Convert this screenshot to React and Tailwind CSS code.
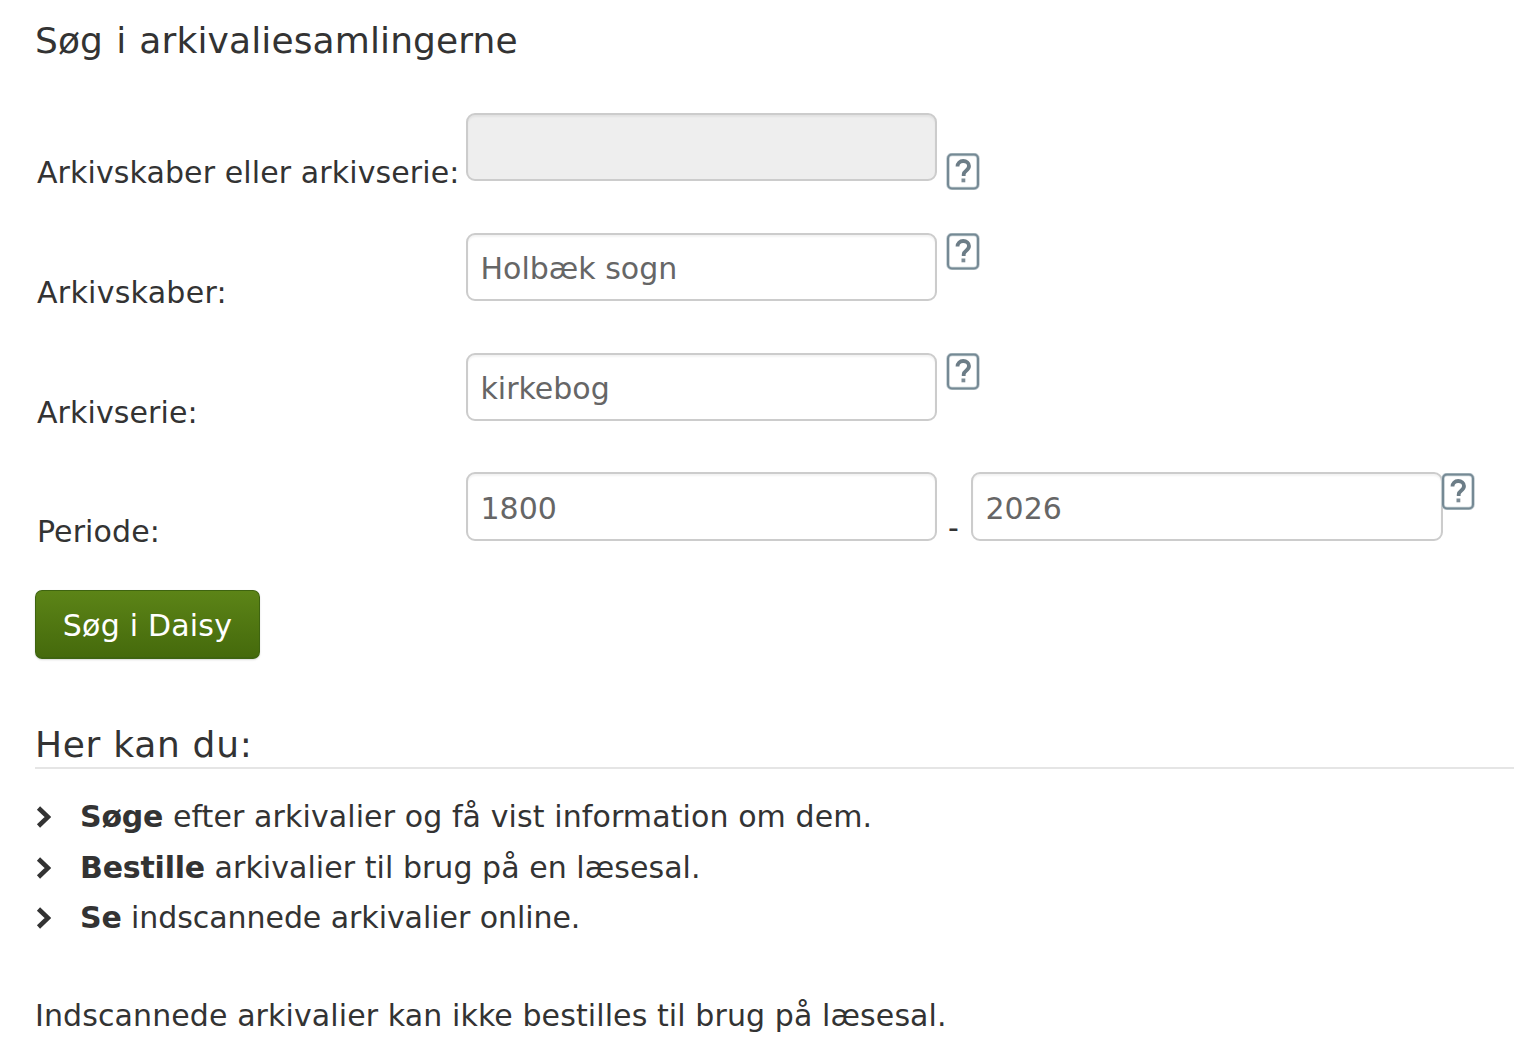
function HelpIcon({ className = '' }) {
  return (
    <svg className={`block shrink-0 ${className}`} width="34" height="37" viewBox="0 0 34 37" fill="none">
      <rect x="2" y="1.500" width="30" height="34" rx="4" fill="#fff" stroke="#c3ced3" strokeWidth="3.600" />
      <rect x="2" y="1.500" width="30" height="34" rx="4" stroke="#758994" strokeWidth="2" />
      <path d="M11.500 13.500c0-3.300 2.400-5.500 5.700-5.500s5.800 2.100 5.800 5c0 2.200-1.200 3.400-2.900 4.700-1.500 1.100-2.400 2-2.400 3.800v1.500" stroke="#6c7d87" strokeWidth="3.800" fill="none" />
      <rect x="15.500" y="25.500" width="3.800" height="3.800" fill="#7d8c95" />
    </svg>
  )
}

function Field({ value, disabled, size = 'w-[471px] h-[68px] pt-[2px]' }) {
  return (
    <input
      readOnly
      value={value}
      className={`block ${size} shrink-0 rounded-[9px] border-2 border-[#cccccc] pl-[12.500px] pr-[14px] text-[30px] text-[#666666] shadow-[inset_0_2px_2px_rgba(0,0,0,0.05)] outline-none font-[inherit] tracking-normal ${disabled ? 'bg-[#eeeeee]' : 'bg-white'}`}
    />
  )
}

function Row({ label, children }) {
  return (
    <div className="flex items-start h-[120px]">
      <label className="w-[431px] shrink-0 pl-[2px] pt-[40px] leading-[40px] whitespace-nowrap">
        {label}
      </label>
      {children}
    </div>
  )
}

const items = [
  { strong: 'Søge', rest: ' efter arkivalier og få vist information om dem.', spacing: 'tracking-[0.1px]' },
  { strong: 'Bestille', rest: ' arkivalier til brug på en læsesal.', spacing: 'tracking-[0.05px]' },
  { strong: 'Se', rest: ' indscannede arkivalier online.', spacing: 'tracking-[-0.06px]' },
]

export default function App() {
  return (
    <div className="bg-white h-[1041px] overflow-hidden pl-[35px] text-[30px] text-[#333333] tracking-[0.1px] font-['DejaVu_Sans',sans-serif]">
      <h2 className="text-[36px] leading-[40px] font-normal pt-[21px] tracking-[0.12px] [word-spacing:1.500px]">Søg i arkivaliesamlingerne</h2>

      <form className="mt-[52px]">
        <Row label="Arkivskaber eller arkivserie:">
          <Field value="" disabled />
          <HelpIcon className="ml-[9px] mt-[40px]" />
        </Row>
        <Row label={<span className="tracking-[0.27px]">Arkivskaber:</span>}>
          <Field value="Holbæk sogn" />
          <HelpIcon className="ml-[9px]" />
        </Row>
        <Row label="Arkivserie:">
          <Field value="kirkebog" />
          <HelpIcon className="ml-[9px]" />
        </Row>
        <div className="flex items-start h-[117px]">
          <label className="w-[431px] shrink-0 pl-[2px] leading-[40px] pt-[39px]">Periode:</label>
          <Field value="1800" size="w-[471px] h-[69px] -mt-[1px] pt-[3px]" />
          <span className="w-[34px] shrink-0 pl-[11px] pt-[35px] leading-[40px]">-</span>
          <Field value="2026" size="w-[472px] h-[69px] -mt-[1px] pt-[3px]" />
          <HelpIcon className="-ml-[2px]" />
        </div>
        <button type="button" className="block w-[225px] h-[69px] pt-[2px] rounded-[7px] border border-[#3e6410] border-b-2 bg-gradient-to-b from-[#5c8417] to-[#456a0c] text-white text-[30px] tracking-[0.2px] shadow-[0_1px_2px_rgba(0,0,0,0.15)]">
          Søg i Daisy
        </button>
      </form>

      <h2 className="mt-[66px] text-[36px] leading-[40px] font-normal tracking-[0.7px]">Her kan du:</h2>
      <div className="mt-[2px] h-[2px] bg-[#e5e5e5]" />

      <ul className="mt-[22px]">
        {items.map(({ strong, rest, spacing }, i) => (
          <li key={strong} className={`flex items-center h-[50.500px] ${i === 1 ? 'pt-[1px]' : ''}`}>
            <svg className="w-[16px] h-[22px] mr-[29px] mt-[1px]" viewBox="0 0 16 22" fill="none">
              <path d="M3.500 2 13 11 3.500 20" stroke="#333333" strokeWidth="4.600" />
            </svg>
            <span className={`whitespace-nowrap ${spacing}`}><strong className="font-bold tracking-[-0.2px]">{strong}</strong>{rest}</span>
          </li>
        ))}
      </ul>

      <p className="mt-[48px] leading-[50px]">Indscannede arkivalier kan ikke bestilles til brug på læsesal.</p>
    </div>
  )
}
